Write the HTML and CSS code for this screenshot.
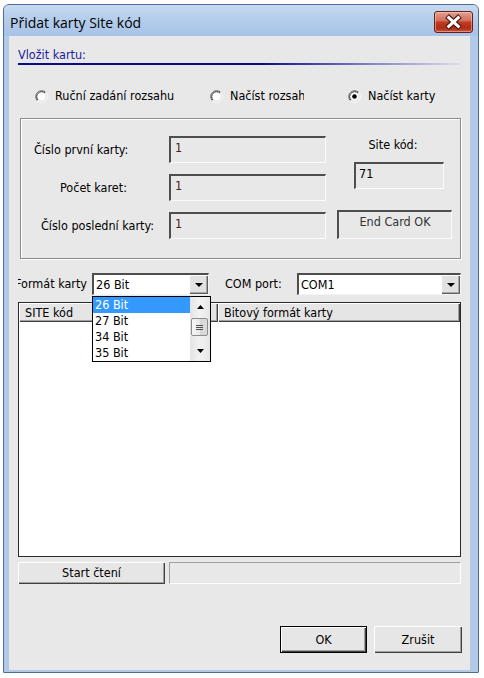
FILE: index.html
```html
<!DOCTYPE html>
<html lang="cs">
<head>
<meta charset="utf-8">
<title>Přidat karty Site kód</title>
<link rel="stylesheet" href="styles.css">
</head>
<body>
<div class="window">
  <div class="titlebar">
    <span class="title">Přidat karty Site kód</span>
    <div class="close" aria-label="Zavřít">
      <svg width="39" height="22" viewBox="0 0 39 22">
        <path d="M13 5 L26 17 M26 5 L13 17" stroke="#4a140c" stroke-width="5.2" fill="none"/>
        <path d="M13.6 5.6 L25.4 16.4 M25.4 5.6 L13.6 16.4" stroke="#ffffff" stroke-width="3" fill="none"/>
      </svg>
    </div>
  </div>
  <div class="client">
    <div class="heading">Vložit kartu:</div>
    <div class="rule"></div>
    <div class="radios">
      <div class="radio r1">
        <svg class="rb" width="13" height="13" viewBox="0 0 13 13">
          <circle cx="6.5" cy="6.5" r="6" fill="#fff"/>
          <path d="M2.26 10.74 A6 6 0 0 1 10.74 2.26" fill="none" stroke="#707070"/>
          <path d="M10.74 2.26 A6 6 0 0 1 2.26 10.74" fill="none" stroke="#fafafa"/>
          <path d="M2.97 10.03 A5 5 0 0 1 10.03 2.97" fill="none" stroke="#2e2e2e"/>
          <path d="M10.03 2.97 A5 5 0 0 1 2.97 10.03" fill="none" stroke="#d4d4d4"/>
        </svg>
        <span>Ruční zadání rozsahu</span>
      </div>
      <div class="radio r2">
        <svg class="rb" width="13" height="13" viewBox="0 0 13 13">
          <circle cx="6.5" cy="6.5" r="6" fill="#fff"/>
          <path d="M2.26 10.74 A6 6 0 0 1 10.74 2.26" fill="none" stroke="#707070"/>
          <path d="M10.74 2.26 A6 6 0 0 1 2.26 10.74" fill="none" stroke="#fafafa"/>
          <path d="M2.97 10.03 A5 5 0 0 1 10.03 2.97" fill="none" stroke="#2e2e2e"/>
          <path d="M10.03 2.97 A5 5 0 0 1 2.97 10.03" fill="none" stroke="#d4d4d4"/>
        </svg>
        <span class="clipped">Načíst rozsah</span>
      </div>
      <div class="radio r3">
        <svg class="rb" width="13" height="13" viewBox="0 0 13 13">
          <circle cx="6.5" cy="6.5" r="6" fill="#fff"/>
          <path d="M2.26 10.74 A6 6 0 0 1 10.74 2.26" fill="none" stroke="#707070"/>
          <path d="M10.74 2.26 A6 6 0 0 1 2.26 10.74" fill="none" stroke="#fafafa"/>
          <path d="M2.97 10.03 A5 5 0 0 1 10.03 2.97" fill="none" stroke="#2e2e2e"/>
          <path d="M10.03 2.97 A5 5 0 0 1 2.97 10.03" fill="none" stroke="#d4d4d4"/>
          <circle cx="6.5" cy="6.5" r="2.3" fill="#000"/>
        </svg>
        <span>Načíst karty</span>
      </div>
    </div>

    <div class="group">
      <div class="fields">
        <div class="lbl l1">Číslo první karty:</div>
        <div class="edit">1</div>
        <div class="lbl l2">Počet karet:</div>
        <div class="edit">1</div>
        <div class="lbl l3">Číslo poslední karty:</div>
        <div class="edit">1</div>
      </div>
      <div class="side">
        <div class="site-lbl">Site kód:</div>
        <div class="edit site">71</div>
        <div class="endcard">End Card OK</div>
      </div>
    </div>

    <div class="combos">
      <div class="cut-lbl"><span>Formát karty</span></div>
      <div class="combo c1">
        <span class="val">26 Bit</span>
        <span class="dd">
          <svg width="8" height="4" viewBox="0 0 8 4"><polygon points="0,0 8,0 4,4" fill="#000"/></svg>
        </span>
        <div class="droplist">
          <div class="items">
            <div class="item sel">26 Bit</div>
            <div class="item">27 Bit</div>
            <div class="item">34 Bit</div>
            <div class="item">35 Bit</div>
          </div>
          <div class="vscroll">
            <div class="sb-btn">
              <svg width="7" height="4" viewBox="0 0 7 4"><polygon points="0,4 7,4 3.5,0" fill="#000"/></svg>
            </div>
            <div class="sb-track">
              <div class="thumb">
                <svg width="7" height="7" viewBox="0 0 7 7">
                  <path d="M0 1.5 H7 M0 3.5 H7 M0 5.5 H7" stroke="#505050" stroke-width="1"/>
                </svg>
              </div>
            </div>
            <div class="sb-btn">
              <svg width="7" height="4" viewBox="0 0 7 4"><polygon points="0,0 7,0 3.5,4" fill="#000"/></svg>
            </div>
          </div>
        </div>
      </div>
      <div class="com-lbl">COM port:</div>
      <div class="combo c2">
        <span class="val">COM1</span>
        <span class="dd">
          <svg width="8" height="4" viewBox="0 0 8 4"><polygon points="0,0 8,0 4,4" fill="#000"/></svg>
        </span>
      </div>
    </div>

    <div class="listview">
      <div class="lv-head">
        <div class="col col1">SITE kód</div>
        <div class="col col2">Bitový formát karty</div>
      </div>
      <div class="lv-body"></div>
    </div>

    <div class="readrow">
      <div class="btn start">Start čtení</div>
      <div class="progress"></div>
    </div>

    <div class="actions">
      <div class="btn ok">OK</div>
      <div class="btn cancel">Zrušit</div>
    </div>
  </div>
</div>
</body>
</html>
```

FILE: styles.css
```css
* { box-sizing: border-box; }

html, body {
  margin: 0;
  padding: 0;
  background: #ffffff;
}

body {
  font-family: "DejaVu Sans Condensed", "DejaVu Sans", sans-serif;
  font-size: 12.5px;
  line-height: 16px;
  color: #000;
}

.window {
  margin: 4px 0 0 3px;
  width: 476px;
  height: 669px;
  border: 1px solid #4d6d94;
  border-radius: 6px 6px 1px 1px;
  background: #b2cae8;
  display: flex;
  flex-direction: column;
  overflow: hidden;
}

.titlebar {
  position: relative;
  height: 31px;
  flex: none;
  background: linear-gradient(#c6daf1 0, #b5cdeb 45%, #a7c3e8 100%);
}

.title {
  display: block;
  padding: 8px 0 0 6px;
  font-family: "Open Sans", "Noto Sans", sans-serif;
  font-size: 14px;
  line-height: 20px;
  color: #000;
}

.close {
  position: absolute;
  top: 6px;
  right: 5px;
  width: 39px;
  height: 22px;
  border: 1px solid #6a1f14;
  border-radius: 3px;
  background: linear-gradient(#e2a193 0%, #d4705c 42%, #bf3b22 52%, #b02d15 80%, #c9553c 100%);
  box-shadow: inset 0 0 0 1px rgba(255, 220, 210, 0.45);
  overflow: hidden;
}

.close svg {
  display: block;
  margin: -1px 0 0 -1px;
}

.client {
  flex: 1;
  margin: 0 8px 2px 5px;
  background: #e8e8e8;
  padding: 11px 9px 0 9px;
  display: flex;
  flex-direction: column;
}

.heading {
  color: #1c1c9e;
  height: 16px;
}

.rule {
  margin-top: 0;
  height: 2px;
  width: 442px;
  background: linear-gradient(to right, #0a0a8c 0%, #0a0a8c 55%, #7a7ac8 78%, #dcdcec 100%);
}

.radios {
  display: flex;
  margin-top: 23px;
  height: 16px;
  padding-left: 17px;
}

.radio {
  display: flex;
  align-items: center;
  gap: 7px;
  white-space: nowrap;
}

.rb { flex: none; display: block; }

.r1 { width: 175px; }
.r2 { width: 138px; }

.clipped {
  display: block;
  width: 74px;
  overflow: hidden;
}

.group {
  margin: 14px 0 0 2px;
  height: 141px;
  border: 1px solid #8c8c8c;
  box-shadow: 1px 1px 0 #ffffff, inset 1px 1px 0 #ffffff;
  display: flex;
  padding: 17px 0 0 0;
}

.fields {
  display: grid;
  grid-template-columns: 148px 157px;
  grid-auto-rows: 27px;
  row-gap: 11px;
}

.lbl {
  align-self: center;
  white-space: nowrap;
}

.l1 { margin-left: 13px; }
.l2 { margin-left: 39px; }
.l3 { margin-left: 20px; }

.edit {
  height: 27px;
  border-style: solid;
  border-width: 2px 1px 1px 2px;
  border-color: #4e4e4e #fbfbfb #fbfbfb #4e4e4e;
  padding: 2px 3px 0 4px;
  color: #4a2222;
}

.side {
  width: 134px;
  display: flex;
  flex-direction: column;
  align-items: flex-start;
}

.site-lbl {
  align-self: stretch;
  text-align: center;
  margin-top: 1px;
}

.edit.site {
  margin: 9px 0 0 28px;
  width: 90px;
  color: #000;
  padding-left: 3px;
}

.endcard {
  margin: 21px 0 0 11px;
  width: 115px;
  height: 29px;
  border-style: solid;
  border-width: 2px 1px 1px 2px;
  border-color: #4e4e4e #fbfbfb #fbfbfb #4e4e4e;
  padding-top: 2px;
  text-align: center;
  color: #333;
}

.combos {
  display: flex;
  align-items: center;
  margin-top: 14px;
  height: 22px;
}

.cut-lbl {
  width: 69px;
  display: flex;
  justify-content: flex-end;
  overflow: hidden;
  white-space: nowrap;
}

.cut-lbl span { flex: none; }

.combo {
  position: relative;
  height: 22px;
  background: #fff;
  border-style: solid;
  border-width: 2px 1px 1px 2px;
  border-color: #4e4e4e #f4f4f4 #f4f4f4 #4e4e4e;
  display: flex;
  align-items: center;
}

.c1 { margin-left: 5px; width: 117px; }

.com-lbl {
  margin-left: 16px;
  width: 72px;
  white-space: nowrap;
}

.c2 { flex: 1; }

.val {
  flex: 1;
  padding-left: 2px;
  white-space: nowrap;
}

.dd {
  width: 19px;
  align-self: stretch;
  background: #e2e2e2;
  box-shadow: inset 1px 1px 0 #ffffff, inset -1px -1px 0 #5e5e5e, inset -2px -2px 0 #a8a8a8;
  display: flex;
  align-items: center;
  justify-content: center;
}

.dd svg { display: block; }

.droplist {
  position: absolute;
  z-index: 5;
  top: 21px;
  left: -2px;
  width: 119px;
  border: 1px solid #000;
  background: #fff;
  display: flex;
}

.items { flex: 1; }

.item {
  height: 16px;
  line-height: 16px;
  padding-left: 2px;
  white-space: nowrap;
}

.item.sel {
  background: #3399ff;
  color: #fff;
}

.vscroll {
  width: 20px;
  display: flex;
  flex-direction: column;
  background: linear-gradient(to right, #e4e4e4, #f1f1f1 45%, #eeeeee 70%, #e6e6e6);
}

.sb-btn {
  height: 20px;
  display: flex;
  align-items: center;
  justify-content: center;
}

.sb-btn svg { display: block; }

.sb-track { flex: 1; }

.thumb {
  margin: 1px 2px 0 1px;
  height: 18px;
  border: 1px solid #8d8d8d;
  border-radius: 2px;
  background: linear-gradient(to right, #f6f6f6, #e9e9e9 50%, #d6d6d6 51%, #dcdcdc);
  display: flex;
  align-items: center;
  justify-content: center;
}

.thumb svg { display: block; }

.listview {
  margin-top: 7px;
  height: 255px;
  border: 1px solid #2a2a2a;
  background: #fff;
  display: flex;
  flex-direction: column;
}

.lv-head {
  display: flex;
  height: 19px;
  flex: none;
}

.col {
  background: #e5e5e5;
  box-shadow: inset 1px 1px 0 #ffffff, inset -1px -1px 0 #404040, inset -2px -2px 0 #a0a0a0;
  padding-left: 6px;
  line-height: 19px;
  white-space: nowrap;
}

.col1 { width: 199px; }
.col2 { flex: 1; }

.lv-body { flex: 1; }

.readrow {
  display: flex;
  gap: 4px;
  margin-top: 5px;
  height: 22px;
}

.btn {
  background: #e6e6e6;
  box-shadow: inset 1px 1px 0 #ffffff, inset -1px -1px 0 #404040, inset -2px -2px 0 #a0a0a0;
  display: flex;
  align-items: center;
  justify-content: center;
  white-space: nowrap;
}

.start { width: 147px; }

.progress {
  flex: 1;
  border: 1px solid;
  border-color: #a0a0a0 #ffffff #ffffff #a0a0a0;
}

.actions {
  display: flex;
  justify-content: flex-end;
  gap: 7px;
  margin: 42px -1px 0 0;
  height: 27px;
}

.ok {
  width: 87px;
  border: 1px solid #000;
}

.cancel { width: 88px; }
```
